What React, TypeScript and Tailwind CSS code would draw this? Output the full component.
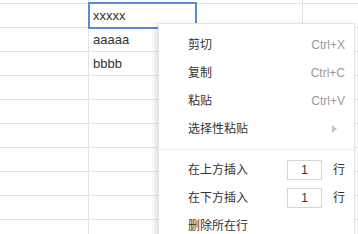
import { useState } from 'react';

const rows = ['', 'xxxxx', 'aaaaa', 'bbbb', '', '', '', '', '', '', ''];

function Grid() {
  return (
    <div className="flex flex-col">
      {rows.map((v, i) => (
        <div
          key={i}
          className={
            'flex box-border border-b border-[#e2e2e2] ' + (i === 0 ? 'h-[4px]' : 'h-[24px]')
          }
        >
          <div className="w-[89px] shrink-0 border-r border-[#e2e2e2]" />
          <div className="w-[214px] shrink-0 border-r border-[#e2e2e2] pl-[4px] flex items-center text-[13px] text-[#333]">
            {i === 1 ? '' : v}
          </div>
          <div className="flex-1" />
        </div>
      ))}
    </div>
  );
}

function Item({ label, hint, arrow }: { label: string; hint?: string; arrow?: boolean }) {
  return (
    <div className="h-[28px] flex items-center pl-[29px] pr-[9px] text-[12px] text-[#333]">
      <span className="flex-1">{label}</span>
      {hint && <span className="text-[#999]">{hint}</span>}
      {arrow && (
        <svg width="5" height="8" viewBox="0 0 5 8" className="mr-[8px]">
          <path d="M0 0 L5 4 L0 8 Z" fill="#c4c4c4" />
        </svg>
      )}
    </div>
  );
}

function InsertItem({ label }: { label: string }) {
  const [n, setN] = useState('1');
  return (
    <div className="h-[28px] flex items-center pl-[29px] pr-[9px] text-[12px] text-[#333]">
      <span className="flex-1">{label}</span>
      <input
        value={n}
        onChange={(e) => setN(e.target.value)}
        className="w-[35px] h-[20px] border border-[#d6d6d6] text-center text-[12px] text-[#333] outline-none"
      />
      <span className="ml-[11px]">行</span>
    </div>
  );
}

export default function App() {
  return (
    <div
      className="relative w-[358px] h-[234px] overflow-hidden bg-white"
      style={{ fontFamily: '"Liberation Sans", "Noto Sans CJK SC", sans-serif' }}
    >
      <Grid />
      {/* cell editor */}
      <div className="absolute left-[88px] top-[2px] w-[109px] h-[27px] border-2 border-[#5b8ad0] bg-white pl-[3px] flex items-center text-[13px] text-[#333]">
        xxxxx
      </div>
      {/* context menu */}
      <div className="absolute left-[158px] top-[23px] w-[197px] pt-[7px] bg-white border border-[#e4e4e4] shadow-[-2px_2px_6px_rgba(0,0,0,0.15)]">
        <Item label="剪切" hint="Ctrl+X" />
        <Item label="复制" hint="Ctrl+C" />
        <Item label="粘贴" hint="Ctrl+V" />
        <Item label="选择性粘贴" arrow />
        <div className="my-[6px] h-px bg-[#eeeeee]" />
        <InsertItem label="在上方插入" />
        <InsertItem label="在下方插入" />
        <Item label="删除所在行" />
      </div>
    </div>
  );
}
